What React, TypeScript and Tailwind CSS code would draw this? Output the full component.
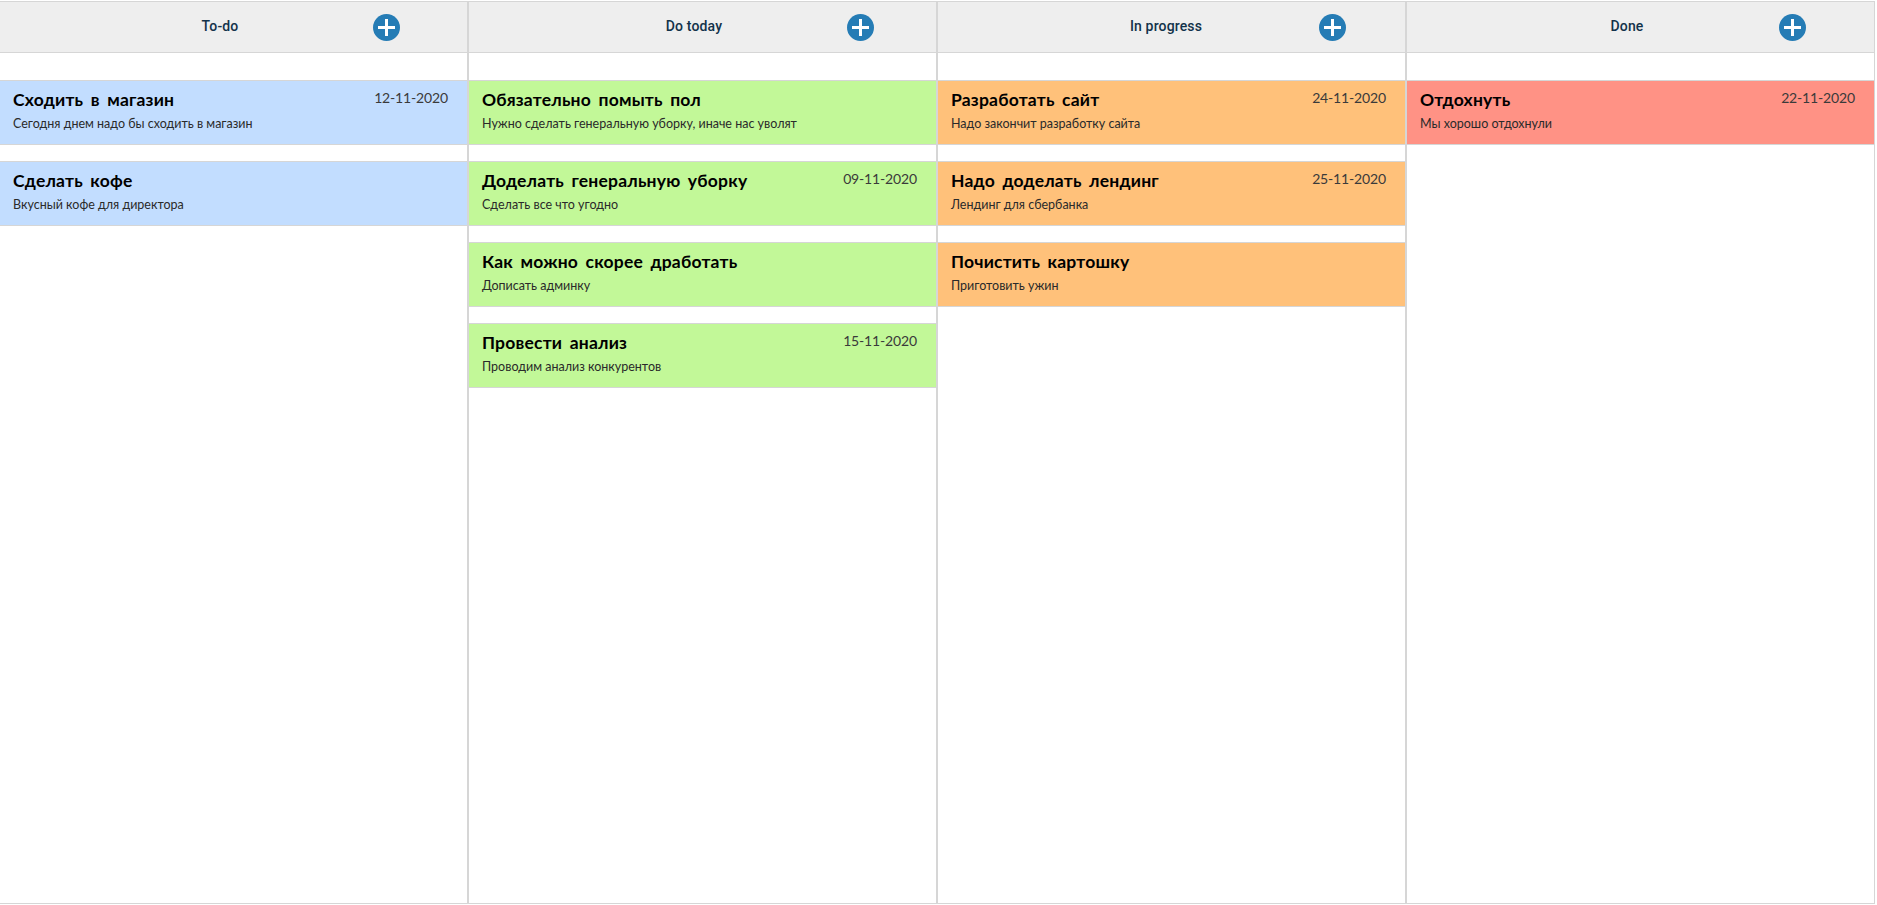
type Task = { title: string; text: string; date?: string };
type Column = { name: string; color: string; spacer: string; tasks: Task[] };

const columns: Column[] = [
  {
    name: 'To-do',
    color: 'bg-[#c2ddff]',
    spacer: 'w-0',
    tasks: [
      { title: 'Сходить в магазин', text: 'Сегодня днем надо бы сходить в магазин', date: '12-11-2020' },
      { title: 'Сделать кофе', text: 'Вкусный кофе для директора' },
    ],
  },
  {
    name: 'Do today',
    color: 'bg-[#c2f898]',
    spacer: 'w-[10px]',
    tasks: [
      { title: 'Обязательно помыть пол', text: 'Нужно сделать генеральную уборку, иначе нас уволят' },
      { title: 'Доделать генеральную уборку', text: 'Сделать все что угодно', date: '09-11-2020' },
      { title: 'Как можно скорее дработать', text: 'Дописать админку' },
      { title: 'Провести анализ', text: 'Проводим анализ конкурентов', date: '15-11-2020' },
    ],
  },
  {
    name: 'In progress',
    color: 'bg-[#ffc17a]',
    spacer: 'w-4',
    tasks: [
      { title: 'Разработать сайт', text: 'Надо закончит разработку сайта', date: '24-11-2020' },
      { title: 'Надо доделать лендинг', text: 'Лендинг для сбербанка', date: '25-11-2020' },
      { title: 'Почистить картошку', text: 'Приготовить ужин' },
    ],
  },
  {
    name: 'Done',
    color: 'bg-[#ff9285]',
    spacer: 'w-0',
    tasks: [{ title: 'Отдохнуть', text: 'Мы хорошо отдохнули', date: '22-11-2020' }],
  },
];

function AddIcon() {
  return (
    <svg className="size-[27px]" viewBox="0 0 27 27">
      <circle cx="13.5" cy="13.5" r="13.5" fill="#257cb5" />
      <path d="M12 5h3v7h7v3h-7v7h-3v-7H5v-3h7z" fill="#fff" />
    </svg>
  );
}

function Card({ task, color }: { task: Task; color: string }) {
  return (
    <article className={`flex h-[65px] justify-between border-y border-[#d6d6d6] pr-[19px] pl-[13px] ${color}`}>
      <div>
        <h3 className="mt-[7px] text-[17.5px] leading-6 font-bold tracking-[0.2px] [word-spacing:3px] whitespace-nowrap text-black">
          {task.title}
        </h3>
        <p className="mt-0.5 text-[12.5px] leading-5 whitespace-nowrap text-[#2a2a2a]">{task.text}</p>
      </div>
      {task.date && (
        <time className="mt-[7px] text-[14px] leading-5 tracking-[-0.15px] text-[#3a3a3a]">{task.date}</time>
      )}
    </article>
  );
}

export default function App() {
  return (
    <main className="h-[905px] overflow-hidden bg-white pt-px font-['Lato',sans-serif]">
      <div className="-ml-px flex h-[903px] w-[1876px]">
        {columns.map((c) => (
          <section key={c.name} className="w-[469px] border border-[#d6d6d6]">
            <header className="flex h-[51px] items-center justify-around border-b border-[#d6d6d6] bg-[#eee]">
              <span className={c.spacer} />
              <h2 className="-mt-px font-['Roboto',sans-serif] text-[14px] font-medium tracking-[0.15px] text-[#12324a]">
                {c.name}
              </h2>
              <button type="button" aria-label="Add">
                <AddIcon />
              </button>
            </header>
            <div className="flex flex-col gap-4 pt-[27px]">
              {c.tasks.map((t) => (
                <Card key={t.title} task={t} color={c.color} />
              ))}
            </div>
          </section>
        ))}
      </div>
    </main>
  );
}
